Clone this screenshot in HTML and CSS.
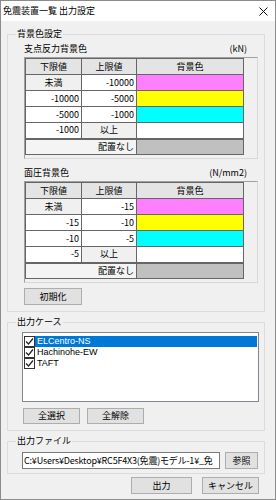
FILE: index.html
```html
<!DOCTYPE html>
<html lang="ja">
<head>
    <meta charset="UTF-8">
    <title>免震装置一覧 出力設定</title>
    <link rel="stylesheet" href="styles.css">
</head>
<body>
<div class="window">
    <div class="titlebar">
        <span class="title">免震装置一覧 出力設定</span>
        <svg class="close" width="9" height="9" viewBox="0 0 9 9"><path d="M0.5 0.5L8.5 8.5M8.5 0.5L0.5 8.5" stroke="#111" stroke-width="1"/></svg>
    </div>

    <!-- 背景色設定 -->
    <fieldset class="group group-color">
        <legend>背景色設定</legend>
        <div class="pane">
            <div class="pane-head"><span>支点反力背景色</span><span>(kN)</span></div>
            <div class="grid">
                <table class="color-table">
                    <colgroup><col class="c1"><col class="c2"><col class="c3"></colgroup>
                    <tr class="head"><td>下限値</td><td>上限値</td><td>背景色</td></tr>
                    <tr><td class="fixed">未満</td><td class="num">-10000</td><td class="pink"></td></tr>
                    <tr><td class="num">-10000</td><td class="num">-5000</td><td class="yellow"></td></tr>
                    <tr><td class="num">-5000</td><td class="num">-1000</td><td class="cyan"></td></tr>
                    <tr><td class="num">-1000</td><td class="fixed">以上</td><td class="white"></td></tr>
                    <tr class="none"><td colspan="2" class="num">配置なし</td><td class="gray"></td></tr>
                </table>
            </div>

            <div class="pane-head second"><span>面圧背景色</span><span>(N/mm2)</span></div>
            <div class="grid">
                <table class="color-table">
                    <colgroup><col class="c1"><col class="c2"><col class="c3"></colgroup>
                    <tr class="head"><td>下限値</td><td>上限値</td><td>背景色</td></tr>
                    <tr><td class="fixed">未満</td><td class="num">-15</td><td class="pink"></td></tr>
                    <tr><td class="num">-15</td><td class="num">-10</td><td class="yellow"></td></tr>
                    <tr><td class="num">-10</td><td class="num">-5</td><td class="cyan"></td></tr>
                    <tr><td class="num">-5</td><td class="fixed">以上</td><td class="white"></td></tr>
                    <tr class="none"><td colspan="2" class="num">配置なし</td><td class="gray"></td></tr>
                </table>
            </div>

            <button type="button" class="btn btn-init">初期化</button>
        </div>
    </fieldset>

    <!-- 出力ケース -->
    <fieldset class="group group-case">
        <legend>出力ケース</legend>
        <div class="listbox">
            <div class="item selected"><span class="check"><svg width="9" height="9" viewBox="0 0 9 9"><path d="M1 4.5L3.5 7L8 1.5" fill="none" stroke="#222" stroke-width="1.2"/></svg></span><span class="item-text">ELCentro-NS</span></div>
            <div class="item"><span class="check"><svg width="9" height="9" viewBox="0 0 9 9"><path d="M1 4.5L3.5 7L8 1.5" fill="none" stroke="#222" stroke-width="1.2"/></svg></span><span class="item-text">Hachinohe-EW</span></div>
            <div class="item"><span class="check"><svg width="9" height="9" viewBox="0 0 9 9"><path d="M1 4.5L3.5 7L8 1.5" fill="none" stroke="#222" stroke-width="1.2"/></svg></span><span class="item-text">TAFT</span></div>
        </div>
        <div class="case-buttons">
            <button type="button" class="btn btn-case">全選択</button>
            <button type="button" class="btn btn-case">全解除</button>
        </div>
    </fieldset>

    <!-- 出力ファイル -->
    <fieldset class="group group-file">
        <legend>出力ファイル</legend>
        <div class="file-row">
            <div class="textbox">C:¥Users¥Desktop¥RC5F4X3(免震)モデル-1¥_免</div>
            <button type="button" class="btn btn-browse">参照</button>
        </div>
    </fieldset>

    <div class="footer">
        <button type="button" class="btn btn-ok">出力</button>
        <button type="button" class="btn btn-cancel">キャンセル</button>
    </div>
</div>
</body>
</html>
```

FILE: styles.css
```css
* {
    box-sizing: border-box;
}

body {
    margin: 0;
    font-family: "Noto Sans CJK JP", "Noto Sans", sans-serif;
    font-size: 9px;
    line-height: 12px;
    color: #000;
}

.window {
    width: 276px;
    height: 500px;
    border: 1px solid #8c8c8c;
    background: #f0f0f0;
    display: flex;
    flex-direction: column;
}

/* title bar */
.titlebar {
    height: 20px;
    flex: none;
    background: #fff;
    display: flex;
    align-items: center;
    justify-content: space-between;
    padding: 0 7px 0 2px;
}

.title {
    font-size: 9px;
}

/* group boxes */
.group {
    margin: 0 10px 0 6px;
    padding: 0;
    min-width: 0;
    border: 1px solid #dcdcdc;
}

.group legend {
    margin-left: 8px;
    padding: 0 1px;
    line-height: 12px;
}

.group-color {
    margin-top: 7px;
}

.group-case,
.group-file {
    margin-top: 4px;
}

.pane {
    margin-left: 16px;
    width: 234px;
    padding-bottom: 6px;
}

.pane-head {
    display: flex;
    justify-content: space-between;
    padding-right: 11px;
    margin-top: 3px;
    margin-bottom: 2px;
    height: 12px;
}

.pane-head.second {
    margin-top: 8px;
}

/* color grid */
.grid {
    width: 234px;
    height: 102px;
    border: 1px solid;
    border-color: #a0a0a0 #d8d8d8 #d8d8d8 #a0a0a0;
    background: #f0f0f0;
}

.color-table {
    border-collapse: collapse;
    table-layout: fixed;
    width: 218px;
}

.color-table .c1 { width: 56px; }
.color-table .c2 { width: 55px; }
.color-table .c3 { width: 107px; }

.color-table td {
    border: 1px solid #666;
    height: 16px;
    padding: 0 2px;
    background: #fff;
    white-space: nowrap;
}

.color-table .head td {
    background: #e4e4e4;
    text-align: center;
}

.color-table .num {
    text-align: right;
}

.color-table .fixed {
    background: #f0f0f0;
    text-align: center;
}

.color-table .none td {
    border-top: 2px solid #666;
    background: #f4f4f4;
}

.color-table .pink { background: #ff80ff; }
.color-table .yellow { background: #ffff00; }
.color-table .cyan { background: #00ffff; }
.color-table .white { background: #fff; }
.color-table .none .gray { background: #c0c0c0; }

/* buttons */
.btn {
    font: inherit;
    color: #000;
    background: #e1e1e1;
    border: 1px solid #adadad;
    padding: 0;
    margin: 0;
    height: 17px;
}

.btn-init {
    margin-top: 5px;
    width: 58px;
}

/* case list */
.listbox {
    margin: 4px 5px 0 14px;
    height: 70px;
    background: #fff;
    border: 1px solid #828790;
    padding: 3px 1px;
}

.item {
    display: flex;
    height: 11px;
    line-height: 11px;
}

.check {
    width: 11px;
    height: 11px;
    flex: none;
    border: 1px solid #333;
    background: #fff;
    display: flex;
    align-items: center;
    justify-content: center;
}

.item-text {
    flex: 1;
    padding-left: 2px;
    font-family: "Liberation Sans", sans-serif;
}

.item.selected .item-text {
    background: #0078d7;
    color: #fff;
}

.case-buttons {
    display: flex;
    gap: 7px;
    margin: 6px 0 6px 15px;
}

.btn-case {
    width: 57px;
    height: 16px;
}

/* output file */
.file-row {
    display: flex;
    align-items: center;
    gap: 5px;
    margin: 5px 0 4px 14px;
}

.textbox {
    width: 198px;
    height: 17px;
    line-height: 15px;
    background: #fff;
    border: 1px solid #7a7a7a;
    padding: 0 1px;
    letter-spacing: -0.2px;
    white-space: nowrap;
    overflow: hidden;
}

.btn-browse {
    width: 33px;
}

/* footer */
.footer {
    display: flex;
    justify-content: flex-end;
    gap: 10px;
    margin: 3px 16px 0 0;
}

.btn-ok {
    width: 61px;
}

.btn-cancel {
    width: 57px;
}
```
